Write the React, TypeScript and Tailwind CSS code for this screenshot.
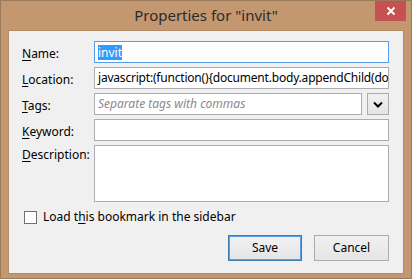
import { useState } from "react";

const font = { fontFamily: '"Noto Sans", "Open Sans", sans-serif' };

function Label({ k, rest }: { k: string; rest: string }) {
  return (
    <span className="text-[12px] text-black">
      <span className="underline underline-offset-2">{k}</span>
      {rest}
    </span>
  );
}

function Row({ label, children }: { label: React.ReactNode; children: React.ReactNode }) {
  return (
    <div className="flex h-[22px] items-center">
      <div className="w-[72px] shrink-0">{label}</div>
      <div className="flex min-w-0 flex-1">{children}</div>
    </div>
  );
}

export default function App() {
  const [checked, setChecked] = useState(false);

  return (
    <div
      className="flex h-[279px] w-[412px] flex-col border border-[#9b7a5c] bg-[#c3976f]"
      style={font}
    >
      {/* title bar */}
      <div className="relative flex h-[29px] shrink-0 items-center justify-center">
        <span className="text-[15px] leading-none text-[#2b2b2b]">Properties for "invit"</span>
        <button className="absolute right-[5px] top-0 flex h-[20px] w-[31px] items-center justify-center bg-[#c75050]">
          <svg width="10" height="10" viewBox="0 0 10 10">
            <path d="M1.5 1.5 L8.5 8.5 M8.5 1.5 L1.5 8.5" stroke="#fff" strokeWidth="2" />
          </svg>
        </button>
      </div>

      {/* content panel */}
      <div className="mx-[7px] flex flex-1 flex-col border border-[#b58b66] bg-[#f0f0f0] pb-[12px] pl-[13px] pr-[14px] pt-[10px]">
        <div className="flex flex-col gap-[4px]">
          <Row label={<Label k="N" rest="ame:" />}>
            <div className="flex h-[22px] flex-1 items-center border border-[#569de5] bg-white px-[3px]">
              <span className="bg-[#3399ff] text-[12px] leading-[15px] text-white">invit</span>
            </div>
          </Row>
          <Row label={<Label k="L" rest="ocation:" />}>
            <div className="flex h-[22px] flex-1 items-center overflow-hidden whitespace-nowrap border border-[#abadb3] bg-white px-[3px] text-[12px] tracking-[-0.2px] text-black">
              javascript:(function(){"{"}document.body.appendChild(do
            </div>
          </Row>
          <Row label={<Label k="T" rest="ags:" />}>
            <div className="flex flex-1 gap-[5px]">
              <div className="flex h-[22px] flex-1 items-center border border-[#abadb3] bg-white px-[3px] text-[12px] italic text-[#8a8a8a]">
                Separate tags with commas
              </div>
              <button className="flex h-[22px] w-[22px] items-center justify-center border border-[#acacac] bg-gradient-to-b from-[#f0f0f0] to-[#e5e5e5]">
                <svg width="10" height="7" viewBox="0 0 10 7">
                  <path d="M1 1.5 L5 5.5 L9 1.5" fill="none" stroke="#000" strokeWidth="2" />
                </svg>
              </button>
            </div>
          </Row>
          <Row label={<Label k="K" rest="eyword:" />}>
            <div className="h-[22px] flex-1 border border-[#abadb3] bg-white" />
          </Row>
          <div className="flex">
            <div className="w-[72px] shrink-0 leading-[16px]">
              <Label k="D" rest="escription:" />
            </div>
            <div className="h-[57px] flex-1 border border-[#abadb3] bg-white" />
          </div>
        </div>

        <label className="mt-[6px] flex items-center gap-[6px] pl-[2px]">
          <span
            onClick={() => setChecked(!checked)}
            className="flex h-[13px] w-[13px] items-center justify-center border border-[#707070] bg-white"
          >
            {checked && <span className="h-[7px] w-[7px] bg-[#333]" />}
          </span>
          <span className="text-[12px] text-black">
            Load t<span className="underline underline-offset-2">h</span>is bookmark in the sidebar
          </span>
        </label>

        <div className="mt-auto flex justify-end gap-[12px]">
          <button className="h-[26px] w-[74px] border border-[#3c7fb1] bg-gradient-to-b from-[#f2f2f2] to-[#e5e5e5] text-[12px] text-black outline outline-1 -outline-offset-2 outline-[#569de5]">
            Save
          </button>
          <button className="h-[26px] w-[75px] border border-[#acacac] bg-gradient-to-b from-[#f0f0f0] to-[#e5e5e5] text-[12px] text-black">
            Cancel
          </button>
        </div>
      </div>
      <div className="h-[4px] shrink-0" />
    </div>
  );
}
